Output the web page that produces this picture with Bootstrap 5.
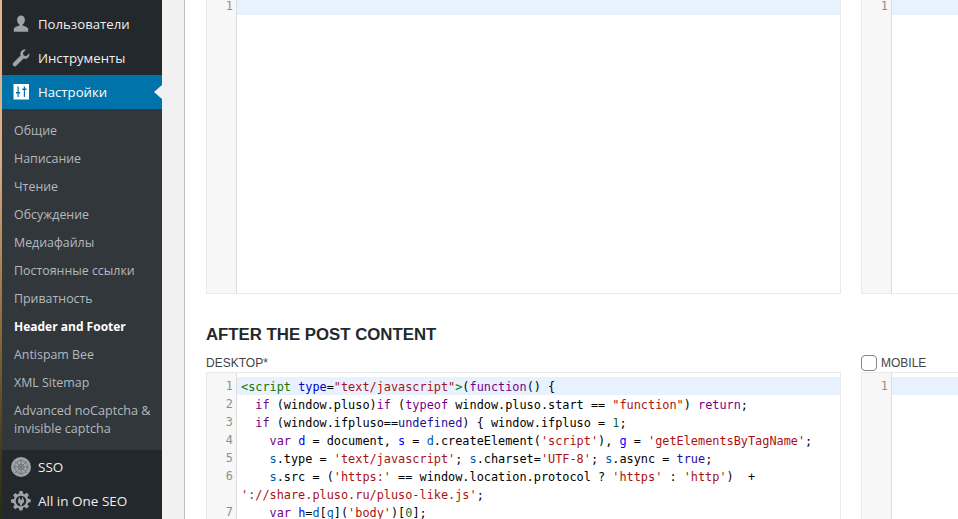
<!DOCTYPE html>
<html lang="ru">
<head>
<meta charset="utf-8">
<title>Header and Footer</title>
<link href="https://cdn.jsdelivr.net/npm/bootstrap@5.3.0/dist/css/bootstrap.min.css" rel="stylesheet">
<style>
html,body{height:519px;overflow:hidden;margin:0}
body{background:#f1f1f1;font-family:"Open Sans","Liberation Sans",sans-serif;color:#333}
.shell{height:519px;overflow:hidden}
.strip{width:2px;background:linear-gradient(#e8b48e 0,#e0ad85 30%,#a87a48 55%,#6f5a28 72%,#3e3a17 88%,#2a2c10 100%)}
.wpside{width:160px;background:#23282d;padding-top:7px}
.wpitem{height:34px;padding-left:36px;color:#eee;font-size:13.2px;line-height:34px;position:relative;white-space:nowrap}
.wpitem.latin{font-size:13.5px}
.wpitem svg{position:absolute;left:9px;top:7px;width:20px;height:20px}
.wpitem.on{background:#0073aa;color:#fff}
.wpitem.on::after{content:"";position:absolute;right:0;top:10px;border:7px solid transparent;border-right-color:#f1f1f1;border-left-width:0;border-right-width:8px}
.wpsub{background:#32373c;padding:8px 0 7px}
.wpsub a{display:block;padding:5px 8px 5px 12px;color:#b4b9be;font-size:12.4px;line-height:18px;text-decoration:none}
.wpsub a.cur{color:#fff;font-weight:700;font-size:12px}
.wpsub a.wide{font-size:12.6px}
.gapcol{width:22px;border-right:1px solid #bdbdbd;box-sizing:content-box}
.page{width:774px;background:#fff;padding-left:21px;overflow:hidden;flex:none}
.editrow{display:flex;gap:20px;width:1300px}
.edit{width:635px;flex:none;border:1px solid #eaeaea;padding:0;display:flex;background:#fff;position:relative}
.edit.tall{height:302px;margin-top:-8px}
.edit.low{height:200px}
.numcol{width:30px;flex:none;background:#f7f7f7;border-right:1px solid #ddd;padding-top:5px}
.numcol div{height:18px;text-align:right;padding-right:3px;color:#8f8f8f;font:11.87px/17px "DejaVu Sans Mono","Liberation Mono",monospace}
.numcol div.dbl{height:36px}
.codecol{flex:1;min-width:0;padding-top:5px;font:11.87px/17px "DejaVu Sans Mono","Liberation Mono",monospace;color:#000}
.ln{min-height:18px;padding-left:4px;line-height:18px;white-space:pre-wrap;word-break:normal;overflow-wrap:anywhere}
.ln.act{background:linear-gradient(#e8f2ff,#e8f2ff) no-repeat top/100% 17px;box-shadow:0 -1px 0 #e8f2ff}
.t{color:#170}.a{color:#00c}.s{color:#a11}.k{color:#708}.d{color:#00f}.v{color:#05a}.n{color:#164}.o{color:#219}
.hd{font:700 16.8px/20px "Liberation Sans",Arial,sans-serif;color:#23282d;margin:31px 0 9px;height:20px}
.lab{font:12px/16px "Liberation Sans",Arial,sans-serif;color:#444;height:18px;display:flex;align-items:center;flex:none;width:635px}
.labs{display:flex;gap:20px;width:1300px}
.lab .form-check-input{width:16px;height:16px;margin:0 4px 0 0;border:1px solid #7e8993;border-radius:4px;flex:none}
</style>
</head>
<body>
<div class="shell d-flex">
  <div class="strip flex-shrink-0"></div>
  <nav class="wpside flex-shrink-0">
    <div class="wpitem"><svg viewBox="0 0 20 20"><path fill="#9ea3a8" d="M10 1.6c2.3 0 3.9 1.9 3.9 4.3 0 1.9-.9 3.6-2.2 4.4v1.2c2.7.9 5.5 1.900 5.500 3.600v2.600H2.800v-2.600c0-1.700 2.800-2.700 5.500-3.600v-1.200C7 9.500 6.100 7.800 6.100 5.900c0-2.400 1.600-4.300 3.900-4.300z"/></svg>Пользователи</div>
    <div class="wpitem"><svg viewBox="0 0 20 20"><path fill="#9ea3a8" d="M18.3 5.2c.4 2-.3 3.700-1.600 4.700-1.200.9-2.700 1.100-4.100.6l-7.300 7.300c-.8.8-2.200.8-3 0s-.8-2.200 0-3l7.300-7.300c-.5-1.400-.3-3 .6-4.200 1-1.300 2.800-2 4.700-1.600l-3 3 .8 2.700 2.600.8 3-3z"/></svg>Инструменты</div>
    <div class="wpitem on"><svg viewBox="0 0 20 20"><rect x="2.500" y="2" width="15.500" height="15.500" fill="#fff"/><path fill="#0073aa" d="M6.500 4.500h1.200v5.500h1.500v1.500H7.700v3.500H6.500v-3.500H5V10h1.500zM12.800 4.500H14v2h1.500V8H14v7h-1.200V8h-1.500V6.500h1.500z"/></svg>Настройки</div>
    <div class="wpsub">
      <a href="#">Общие</a>
      <a href="#">Написание</a>
      <a href="#">Чтение</a>
      <a href="#">Обсуждение</a>
      <a href="#">Медиафайлы</a>
      <a href="#">Постоянные ссылки</a>
      <a href="#">Приватность</a>
      <a href="#" class="cur">Header and Footer</a>
      <a href="#">Antispam Bee</a>
      <a href="#">XML Sitemap</a>
      <a href="#" class="wide">Advanced noCaptcha &amp; invisible captcha</a>
    </div>
    <div class="wpitem latin"><svg viewBox="0 0 20 20"><circle cx="10" cy="10" r="10" fill="#9ea3a8"/><g stroke="#6a6f74" stroke-width=".8" fill="none"><circle cx="10" cy="10" r="2.800"/><circle cx="10" cy="10" r="6.500"/><path d="M4 4l12 12M16 4L4 16M10 2v16M2 10h16"/></g></svg>SSO</div>
    <div class="wpitem latin"><svg viewBox="0 0 20 20"><path fill="#9ea3a8" fill-rule="evenodd" d="M8.500 0h3l.5 2.600 1.600.7 2.200-1.500 2.100 2.100-1.500 2.200.7 1.600 2.600.5v3l-2.600.5-.7 1.600 1.500 2.200-2.100 2.100-2.200-1.500-1.600.7-.5 2.600h-3L8 17.400l-1.600-.7-2.200 1.500-2.100-2.100 1.500-2.200-.7-1.600L0 11.500v-3l2.900-.5.7-1.600-1.500-2.200 2.100-2.100 2.200 1.500L8 2.600zM10 4.700a5.300 5.300 0 1 0 0 10.600 5.300 5.300 0 0 0 0-10.600z"/><path fill="#9ea3a8" d="M7.800 6.500h1.200v2h2v-2h1.200v2h.8v1.700c0 1.300-.9 2.300-2 2.500V14.500H9v-1.800c-1.100-.2-2-1.200-2-2.500V8.500h.8z"/></svg>All in One SEO</div>
  </nav>
  <div class="gapcol flex-shrink-0"></div>
  <main class="page">
    <div class="editrow">
      <div class="edit tall"><div class="numcol"><div>1</div></div><div class="codecol"><div class="ln act"> </div></div></div>
      <div class="edit tall"><div class="numcol"><div>1</div></div><div class="codecol"><div class="ln act"> </div></div></div>
    </div>
    <h2 class="hd">AFTER THE POST CONTENT</h2>
    <div class="labs">
      <div class="lab">DESKTOP*</div>
      <div class="lab"><input type="checkbox" class="form-check-input" aria-label="MOBILE">MOBILE</div>
    </div>
    <div class="editrow">
      <div class="edit low">
        <div class="numcol"><div>1</div><div>2</div><div>3</div><div>4</div><div>5</div><div class="dbl">6</div><div>7</div></div>
        <div class="codecol">
<div class="ln act"><span class="t">&lt;script</span> <span class="a">type</span>=<span class="s">"text/javascript"</span><span class="t">&gt;</span>(<span class="k">function</span>() {</div>
<div class="ln">  <span class="k">if</span> (window.pluso)<span class="k">if</span> (<span class="k">typeof</span> window.pluso.start == <span class="s">"function"</span>) <span class="k">return</span>;</div>
<div class="ln">  <span class="k">if</span> (window.ifpluso==<span class="o">undefined</span>) { window.ifpluso = <span class="n">1</span>;</div>
<div class="ln">    <span class="k">var</span> <span class="d">d</span> = document, <span class="d">s</span> = <span class="v">d</span>.createElement(<span class="s">'script'</span>), <span class="d">g</span> = <span class="s">'getElementsByTagName'</span>;</div>
<div class="ln">    <span class="v">s</span>.type = <span class="s">'text/javascript'</span>; <span class="v">s</span>.charset=<span class="s">'UTF-8'</span>; <span class="v">s</span>.async = <span class="o">true</span>;</div>
<div class="ln">    <span class="v">s</span>.src = (<span class="s">'https:'</span> == window.location.protocol ? <span class="s">'https'</span> : <span class="s">'http'</span>)  + <span class="s">'://share.pluso.ru/pluso-like.js'</span>;</div>
<div class="ln">    <span class="k">var</span> <span class="d">h</span>=<span class="v">d</span>[<span class="v">g</span>](<span class="s">'body'</span>)[<span class="n">0</span>];</div>
        </div>
      </div>
      <div class="edit low"><div class="numcol"><div>1</div></div><div class="codecol"><div class="ln act"> </div></div></div>
    </div>
  </main>
</div>
<script src="https://cdn.jsdelivr.net/npm/bootstrap@5.3.0/dist/js/bootstrap.bundle.min.js"></script>
</body>
</html>
